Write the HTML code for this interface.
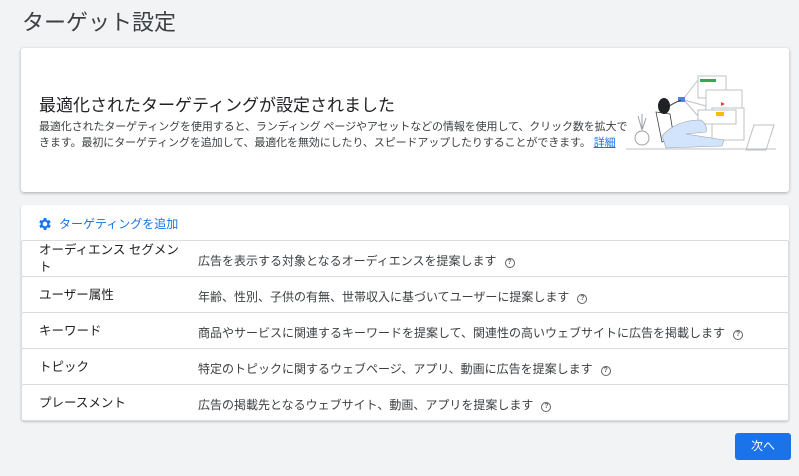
<!DOCTYPE html><html><head><meta charset="utf-8"><style>
body{margin:0;width:799px;height:476px;background:#f1f3f4;font-family:"Liberation Sans","Noto Sans CJK JP",sans-serif;color:#202124;position:relative;overflow:hidden}
.t{position:absolute;left:22px;top:5px;font-size:22px;color:#3c4043}
.c1{position:absolute;left:21px;top:48px;width:768px;height:144px;background:#fff;border-radius:3px;box-shadow:0 1px 3px rgba(0,0,0,.3)}
.h{position:absolute;left:18px;top:43px;font-size:17px}
.p{position:absolute;left:18px;top:71px;width:596px;font-size:11px;line-height:16px;color:#3c4043;letter-spacing:-0.1px}
.p a{color:#1a73e8;text-decoration:underline}
.c2{position:absolute;left:21px;top:205px;width:768px;height:216px;background:#fff;border-radius:3px;box-shadow:0 1px 2px rgba(0,0,0,.2)}
.add{position:absolute;left:16px;top:10px;font-size:12px;color:#1a73e8;display:flex;align-items:center;gap:6px}
.r{position:absolute;left:0;width:766px;height:35px;border:1px solid #dadce0;border-radius:2px;font-size:12.5px}
.r .a{position:absolute;left:17px;top:10px;width:150px;line-height:17px}
.r .b{position:absolute;left:176px;top:11px;color:#3c4043;font-size:12px}
.q{display:inline-block;width:8px;height:8px;border:1.3px solid #5f6368;border-radius:50%;font-size:7px;line-height:8px;text-align:center;margin-left:8px;vertical-align:1px;font-weight:bold;color:#5f6368}
.btn{position:absolute;left:735px;top:433px;width:56px;height:27px;background:#1a73e8;border-radius:3px;color:#fff;font-size:12px;text-align:center;line-height:27px}
</style></head><body>
<div class="t">ターゲット設定</div>
<div class="c1">
<div class="h">最適化されたターゲティングが設定されました</div>
<div class="p">最適化されたターゲティングを使用すると、ランディング ページやアセットなどの情報を使用して、クリック数を拡大できます。最初にターゲティングを追加して、最適化を無効にしたり、スピードアップしたりすることができます。 <a>詳細</a></div>
<svg style="position:absolute;left:605px;top:22px" width="150" height="85" viewBox="0 0 150 85">
<g fill="none" stroke="#bdc1c6" stroke-width="1">
<rect x="72" y="6" width="28" height="22" fill="#fff"/><rect x="94" y="32" width="22" height="22"/><rect x="80" y="20" width="36" height="26" fill="#fff"/><rect x="86" y="38" width="32" height="32" fill="#fff"/><rect x="72" y="40" width="38" height="14" fill="#fff"/>
<line x1="58" y1="28" x2="72" y2="10"/><line x1="58" y1="30" x2="80" y2="36"/><line x1="58" y1="30" x2="72" y2="46"/>
<path d="M120 80 L128 55 L148 55 L140 80Z"/><line x1="0" y1="79" x2="150" y2="79"/>
</g>
<rect x="74" y="9" width="16" height="3" fill="#34a853"/><rect x="90" y="42" width="8" height="4" fill="#fbbc04"/><path d="M95 32 l4 2 -4 2z" fill="#ea4335"/>
<rect x="52" y="27" width="7" height="5" fill="#4285f4"/>
<path d="M38 40 Q45 34 55 30" stroke="#3c4043" fill="none"/>
<path d="M30 42 L44 44 L48 68 L36 72 Z" fill="#fff" stroke="#3c4043" stroke-width=".8"/>
<path d="M36 66 Q50 50 75 50 Q82 55 80 62 L60 64 L98 70 L96 76 L40 78 Z" fill="#d2e3fc" stroke="#9aa0a6" stroke-width=".6"/>
<ellipse cx="38" cy="36" rx="6" ry="8" fill="#202124"/>
<circle cx="16" cy="68" r="7" fill="#fff" stroke="#9aa0a6"/><path d="M16 60 l-4 -14 M16 60 l4 -12 M16 60 l0 -16" stroke="#9aa0a6"/>
</svg>
</div>
<div class="c2">
<div class="add"><svg width="16" height="16" viewBox="0 0 24 24"><path fill="#1a73e8" d="M19.4 13a7.5 7.5 0 000-2l2.1-1.6-2-3.5-2.5 1a7 7 0 00-1.7-1L15 3h-4l-.4 2.9a7 7 0 00-1.7 1l-2.5-1-2 3.5L6.6 11a7.5 7.5 0 000 2l-2.1 1.6 2 3.5 2.5-1a7 7 0 001.7 1L11 21h4l.4-2.9a7 7 0 001.7-1l2.5 1 2-3.5zM13 15.5a3.5 3.5 0 110-7 3.5 3.5 0 010 7z" transform="translate(-1 0)"/></svg>ターゲティングを追加</div>
<div class="r" style="top:35px"><div class="a" style="top:1px">オーディエンス セグメント</div><div class="b">広告を表示する対象となるオーディエンスを提案します<span class="q">?</span></div></div>
<div class="r" style="top:71px"><div class="a">ユーザー属性</div><div class="b">年齢、性別、子供の有無、世帯収入に基づいてユーザーに提案します<span class="q">?</span></div></div>
<div class="r" style="top:107px"><div class="a">キーワード</div><div class="b">商品やサービスに関連するキーワードを提案して、関連性の高いウェブサイトに広告を掲載します<span class="q">?</span></div></div>
<div class="r" style="top:143px"><div class="a">トピック</div><div class="b">特定のトピックに関するウェブページ、アプリ、動画に広告を提案します<span class="q">?</span></div></div>
<div class="r" style="top:179px"><div class="a">プレースメント</div><div class="b">広告の掲載先となるウェブサイト、動画、アプリを提案します<span class="q">?</span></div></div>
</div>
<div class="btn">次へ</div>
</body></html>
